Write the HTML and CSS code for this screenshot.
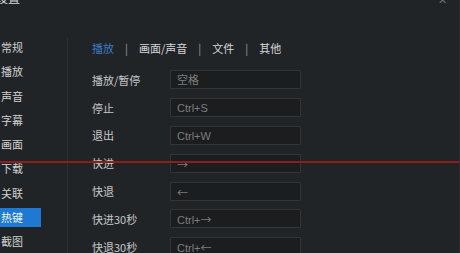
FILE: index.html
```html
<!DOCTYPE html>
<html lang="zh-CN">
<head>
  <meta charset="UTF-8">
  <title>设置</title>
  <link rel="stylesheet" href="styles.css">
</head>
<body>
  <div class="window">
    <div class="title">设置</div>
    <div class="close">✕</div>

    <div class="main">
      <!-- Sidebar -->
      <ul class="side">
        <li>常规</li>
        <li>播放</li>
        <li>声音</li>
        <li>字幕</li>
        <li>画面</li>
        <li>下载</li>
        <li>关联</li>
        <li class="active">热键</li>
        <li>截图</li>
      </ul>

      <!-- Hotkey panel -->
      <div class="panel">
        <div class="tabs">
          <span class="tab current">播放</span>
          <span class="sep">|</span>
          <span class="tab">画面/声音</span>
          <span class="sep">|</span>
          <span class="tab">文件</span>
          <span class="sep">|</span>
          <span class="tab">其他</span>
        </div>

        <div class="row"><span class="label">播放/暂停</span><div class="key">空格</div></div>
        <div class="row"><span class="label">停止</span><div class="key">Ctrl+S</div></div>
        <div class="row"><span class="label">退出</span><div class="key">Ctrl+W</div></div>
        <div class="row"><span class="label">快进</span><div class="key"><span class="arrow">→</span></div></div>
        <div class="row"><span class="label">快退</span><div class="key"><span class="arrow">←</span></div></div>
        <div class="row"><span class="label">快进30秒</span><div class="key">Ctrl+<span class="arrow">→</span></div></div>
        <div class="row"><span class="label">快退30秒</span><div class="key">Ctrl+<span class="arrow">←</span></div></div>
      </div>
    </div>

    <div class="redline"></div>
  </div>
</body>
</html>
```

FILE: styles.css
```css
html, body {
  margin: 0;
  padding: 0;
  background: #212427;
}
body {
  font-family: "Noto Sans CJK SC", "Liberation Sans", sans-serif;
  font-size: 11px;
  color: #c9cacb;
  overflow: hidden;
}
.window {
  position: relative;
  width: 460px;
  height: 253px;
  background: #212427;
  border-right: 1px solid #2c2f32;
  box-sizing: border-box;
  overflow: hidden;
}
.title {
  position: absolute;
  left: -4px;
  top: -11px;
  font-size: 12px;
  color: #d8d8d8;
}
.close {
  position: absolute;
  right: 12px;
  top: -9px;
  font-size: 11px;
  color: #6c6f72;
}
.main {
  display: flex;
  padding-top: 38px;
}
.side {
  list-style: none;
  margin: 0;
  padding: 0;
  width: 67px;
  border-right: 1px solid #2e3134;
  height: 215px;
}
.side li {
  height: 24.3px;
  line-height: 19px;
  padding-left: 1px;
  color: #d0d1d2;
}
.side li.active {
  width: 40px;
  height: 19px;
  margin-bottom: 5.3px;
  background: #1f78d1;
  color: #f2f6fa;
}
.panel {
  padding-left: 24px;
}
.tabs {
  display: flex;
  align-items: center;
  height: 19px;
  margin-bottom: 9px;
}
.tab {
  color: #d6d7d8;
}
.tab.current {
  color: #3b7ac4;
}
.sep {
  color: #9a9c9e;
  margin: 0 11px 0 11px;
  font-size: 11px;
}
.row {
  display: flex;
  align-items: center;
  height: 27.8px;
}
.label {
  width: 78px;
  color: #c6c7c8;
}
.key {
  width: 131px;
  height: 19px;
  line-height: 19px;
  padding-left: 6px;
  box-sizing: border-box;
  background: #1b1d1f;
  border: 1px solid #323538;
  border-radius: 1px;
  color: #7b7e81;
  font-family: "Liberation Sans", "Noto Sans CJK SC", sans-serif;
}
.arrow {
  font-family: "Noto Sans CJK SC", sans-serif;
  font-size: 11px;
}
.redline {
  position: absolute;
  left: 0;
  right: 0;
  top: 161px;
  height: 2px;
  background: #8b1f1f;
}
```
